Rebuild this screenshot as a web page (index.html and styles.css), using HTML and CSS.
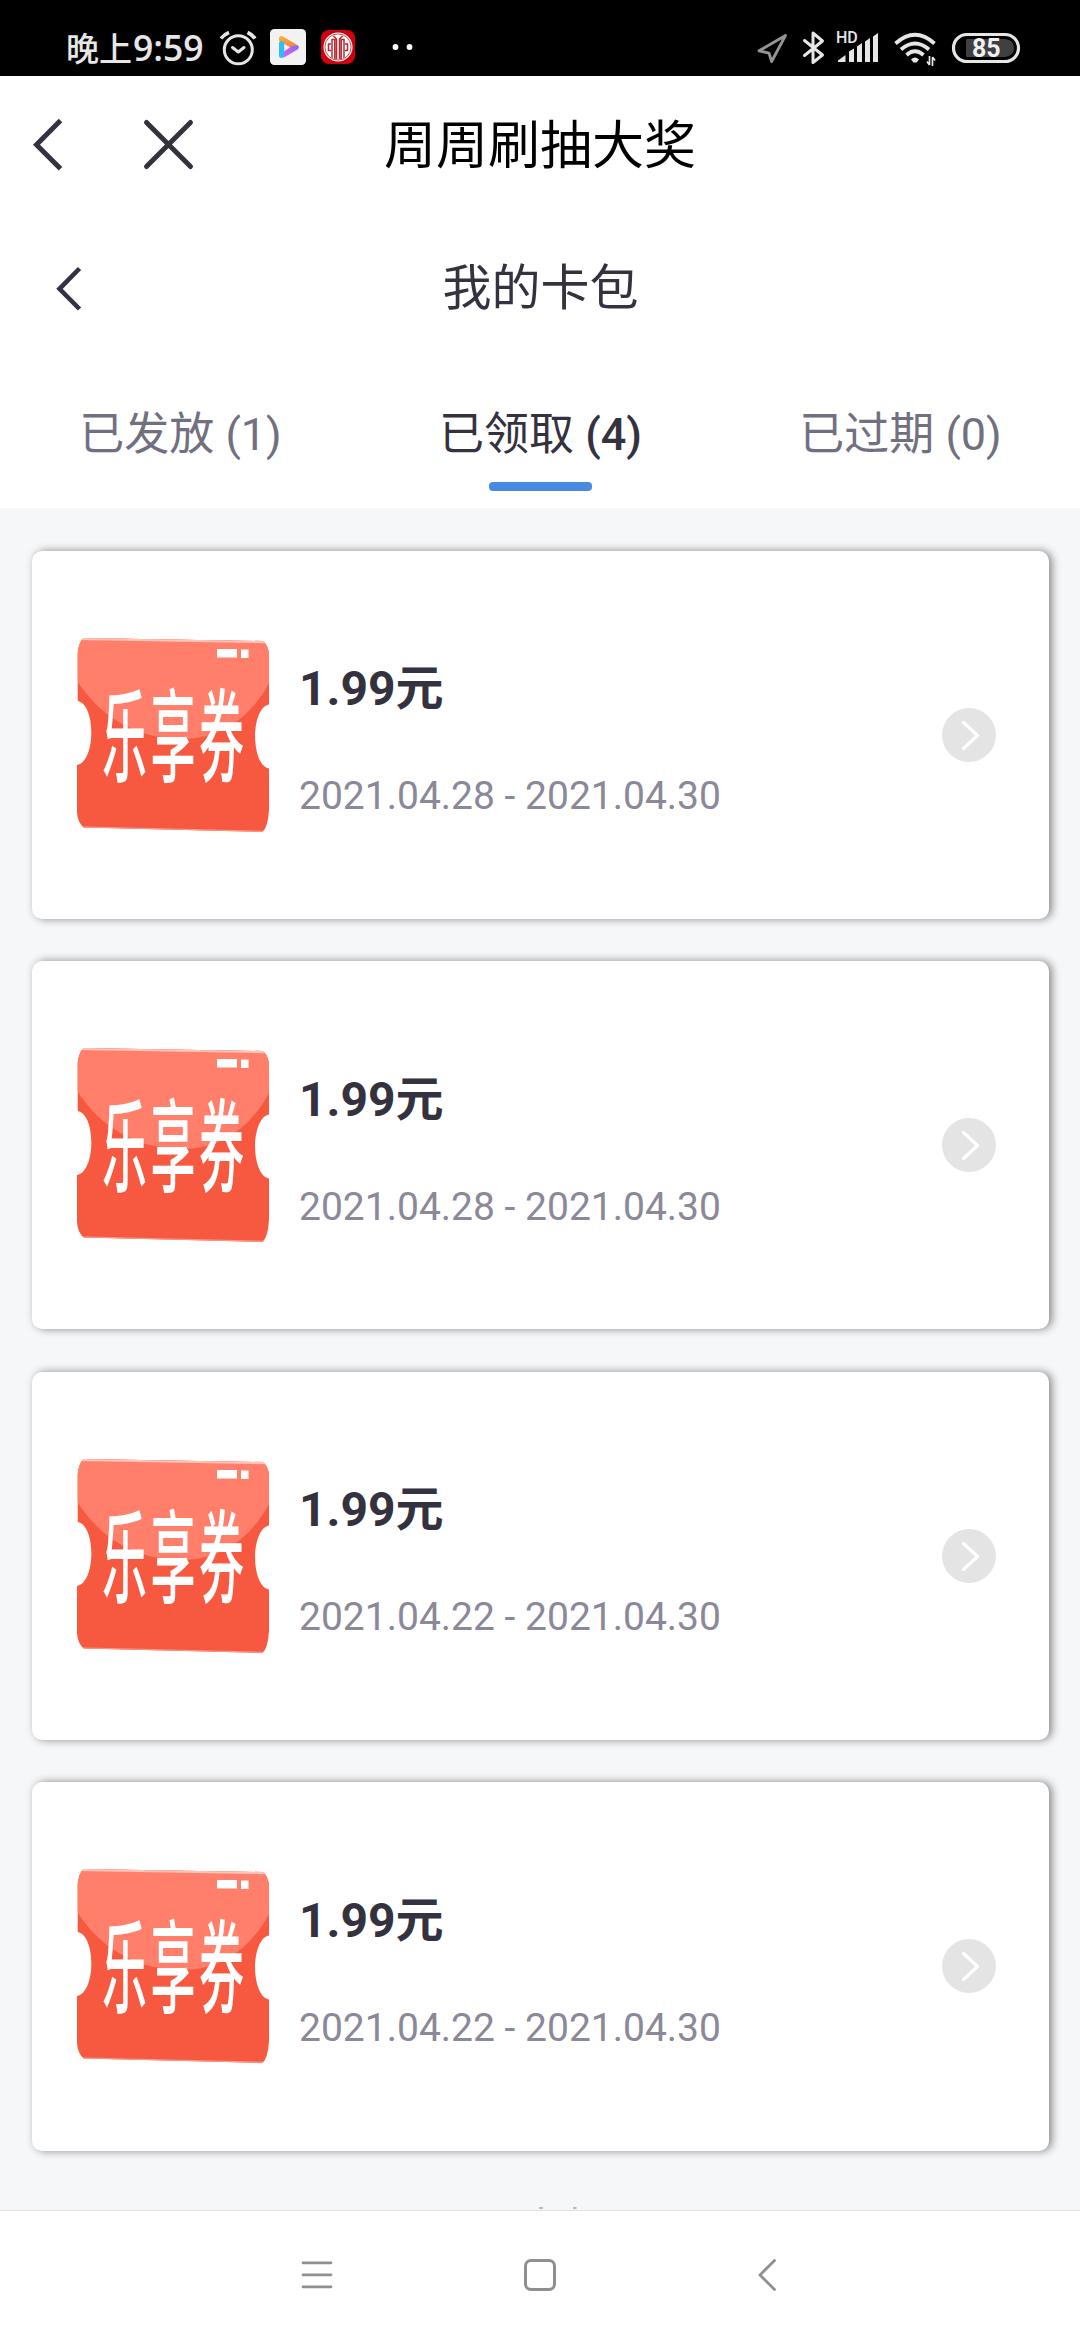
FILE: index.html
```html
<!DOCTYPE html>
<html lang="zh-CN">
<head>
<meta charset="utf-8">
<title>周周刷抽大奖</title>
<link rel="stylesheet" href="styles.css">
</head>
<body>
<svg class="defs" width="0" height="0">
  <defs>
    <linearGradient id="play-orange" x1="0" y1="0" x2="1" y2="1"><stop offset="0" stop-color="#ffb02e"/><stop offset="1" stop-color="#f07a4a"/></linearGradient>
    <linearGradient id="play-violet" x1="0" y1="1" x2="1" y2="0"><stop offset="0" stop-color="#e85cf0"/><stop offset="1" stop-color="#7a6cf5"/></linearGradient>
    <clipPath id="citic-disc"><circle cx="338" cy="47" r="12.300"/></clipPath>
    <clipPath id="ticket-shape"><path d="M7.500 2 L187 5 Q192 9 193 18 V68.500 C174.500 72 174.500 129 193 132.500 V174 Q192 191 186.500 196 L7.500 191.500 Q1.500 186 1 176 V129 C20 126 20 68 1.700 65 V17 Q2.500 7 7.500 2Z"/></clipPath>
    <symbol id="ticket" viewBox="0 0 194 198">
      <g clip-path="url(#ticket-shape)">
        <rect width="194" height="198" fill="#f75940"/>
        <path d="M0 0H194V45C176 80 146 103 106 103C58 103 22 79 0 43Z" fill="#ff7f6b"/>
        <path d="M0 2.500L194 5.800" stroke="#ffc3b9" stroke-width="3"/>
        <path d="M0 191.500L194 196" stroke="#fb9584" stroke-width="2.500"/>
      </g>
      <path d="M141 13h20v8.500h-20zM165 13.500h7.500v8.500h-7.500z" fill="#fff"/>
      <text class="ticket-text" transform="translate(26 138) scale(1 2.250)" x="0" y="0">乐享券</text>
    </symbol>
    <symbol id="go" viewBox="0 0 54 54">
      <circle cx="27" cy="27" r="27" fill="#e4e4e4"/>
      <path d="M21.500 14.500L35.500 27.500L21.500 40.500" fill="none" stroke="#fff" stroke-width="3.200" stroke-linecap="round" stroke-linejoin="round"/>
    </symbol>
  </defs>
</svg>

<div class="screen">
  <div class="statusbar">
    <span class="clock">晚上<b class="clock-digits">9:59</b></span>
    <svg class="status-left" width="200" height="76" viewBox="218 0 200 76">
      <g fill="none" stroke="#e6e6e6" stroke-width="3" stroke-linecap="round" stroke-linejoin="round">
        <circle cx="238.300" cy="49.800" r="14"/>
        <path d="M232.500 47.500L238.300 52L244 47.500"/>
        <path stroke-width="3.600" stroke-linecap="butt" d="M221 38.500Q224 34.500 229 32.500M247.500 32.500Q252.500 34.500 255 38.500"/>
      </g>
      <rect x="270" y="29" width="36" height="36" rx="4.500" fill="#f2f2f2"/>
      <path d="M279 38.500C279 36 281 35.300 283 36.500L298 45.500L294 49.500L279 41Z" fill="url(#play-orange)"/>
      <path d="M298 45.500Q300 47.500 297.500 49.500L284 57.500V51.500L292 46Z" fill="url(#play-violet)"/>
      <rect x="279" y="41" width="5.200" height="17" rx="2.500" fill="#2ebdf8"/>
      <rect x="321" y="30" width="34" height="34" rx="8" fill="#d0000f"/>
      <circle cx="338" cy="47" r="14.500" fill="#fff"/>
      <circle cx="338" cy="47" r="13.100" fill="none" stroke="#c0202a" stroke-width=".8"/>
      <g clip-path="url(#citic-disc)" fill="none" stroke="#b92b33" stroke-width="1.500">
        <path d="M331.200 39.500H334.800V60M344.800 39.500H341.200V60M332 39V58M344 39V58M333 35.500L336.500 39V60M343 35.500L339.500 39V60"/>
        <path d="M331 44H328.500V50.500H331M345 44H347.500V50.500H345"/>
      </g>
      <circle cx="395.500" cy="47" r="2.900" fill="#fff"/>
      <circle cx="409.500" cy="47" r="2.900" fill="#fff"/>
    </svg>
    <svg class="status-right" width="266" height="76" viewBox="756 0 266 76">
      <path d="M759 50.800L785.500 35.500L771.600 61.500L769 53.200Z" fill="none" stroke="#949494" stroke-width="2.800" stroke-linejoin="round"/>
      <path d="M804.500 40.500L822.500 55L813 62.500V33L822.500 41L804.500 55.500" fill="none" stroke="#e6e6e6" stroke-width="3" stroke-linejoin="round" stroke-linecap="round"/>
      <text class="hd" x="836" y="43">HD</text>
      <path d="M838 62V60.500L845.500 55V62ZM849 62V51.500L854 48.500V62ZM857 62V46.500L862 43V62ZM865 62V41.500L870 38V62ZM873 62V36.500L878 33V62Z" fill="#e6e6e6"/>
      <g fill="none" stroke="#e6e6e6" stroke-width="3.800">
        <path d="M895.500 43.500Q915 26 934.500 43.500"/>
        <path d="M901 49.500Q915 37.500 929 49.500"/>
        <path d="M906.500 55Q915 47.500 923.500 55"/>
        <path stroke-width="1.700" d="M929.500 56V65M932.500 66V57M927 61.500L929.500 65M935 60.500L932.500 57"/>
      </g>
      <path d="M911 59.500Q915 55.500 919 59.500L916.500 62.500H913.500Z" fill="#e6e6e6"/>
      <rect x="953.500" y="34.500" width="65" height="27" rx="13.500" fill="none" stroke="#e6e6e6" stroke-width="3.200"/>
      <path d="M967 39H1005Q1014 40 1014 48Q1014 56 1005 57H967Q966 57 966 56V40Q966 39 967 39Z" fill="#404040"/>
      <text class="battery" x="986.300" y="57">85</text>
    </svg>
  </div>

  <header class="appbar">
    <div class="appbar-actions">
      <svg width="32" height="54" viewBox="32 118 32 54"><path d="M60.500 120.500L36.500 144.700L60.500 168.700" fill="none" stroke="#34323e" stroke-width="5"/></svg>
      <svg width="54" height="54" viewBox="142 118 54 54"><path d="M146.500 122.500L190.500 166.500M190.500 122.500L146.500 166.500" fill="none" stroke="#34323e" stroke-width="5" stroke-linecap="round"/></svg>
    </div>
    <h1 class="appbar-title">周周刷抽大奖</h1>
  </header>

  <div class="pagebar">
    <svg class="pagebar-back" width="30" height="48" viewBox="55 265 30 48"><path d="M79.500 268.500L59.500 288.800L79.500 309" fill="none" stroke="#34323e" stroke-width="4.600"/></svg>
    <h2 class="pagebar-title">我的卡包</h2>
  </div>

  <nav class="tabs">
    <div class="tab">已发放 (1)</div>
    <div class="tab tab-active">已领取 <span class="tab-count">(4)</span></div>
    <div class="tab">已过期 (0)</div>
  </nav>

  <main class="list">
    <article class="card">
      <svg class="card-ticket"><use href="#ticket"/></svg>
      <div class="card-body"><div class="card-price">1.99元</div><div class="card-date">2021.04.28 - 2021.04.30</div></div>
      <svg class="card-go"><use href="#go"/></svg>
    </article>
    <article class="card">
      <svg class="card-ticket"><use href="#ticket"/></svg>
      <div class="card-body"><div class="card-price">1.99元</div><div class="card-date">2021.04.28 - 2021.04.30</div></div>
      <svg class="card-go"><use href="#go"/></svg>
    </article>
    <article class="card">
      <svg class="card-ticket"><use href="#ticket"/></svg>
      <div class="card-body"><div class="card-price">1.99元</div><div class="card-date">2021.04.22 - 2021.04.30</div></div>
      <svg class="card-go"><use href="#go"/></svg>
    </article>
    <article class="card">
      <svg class="card-ticket"><use href="#ticket"/></svg>
      <div class="card-body"><div class="card-price">1.99元</div><div class="card-date">2021.04.22 - 2021.04.30</div></div>
      <svg class="card-go"><use href="#go"/></svg>
    </article>
    <svg class="list-end" width="40" height="2" viewBox="0 0 40 2"><path d="M1 1h4M35 1h3.500" stroke="#a5a6a8" stroke-width="1.600"/></svg>
  </main>

  <footer class="navbar">
    <svg width="34" height="34" viewBox="300 2258 34 34"><path d="M303 2262.800H331M303 2274.800H331M303 2286.800H331" stroke="#8f8f8f" stroke-width="2.800" stroke-linecap="round"/></svg>
    <svg width="34" height="34" viewBox="523 2258 34 34"><rect x="525.500" y="2260.500" width="29" height="29" rx="5.500" fill="none" stroke="#8f8f8f" stroke-width="3"/></svg>
    <svg class="navbar-back" width="22" height="34" viewBox="756 2258 22 34"><path d="M774.500 2260.500L760 2275L774.500 2289.500" fill="none" stroke="#8f8f8f" stroke-width="2.800" stroke-linecap="round" stroke-linejoin="round"/></svg>
  </footer>
</div>
</body>
</html>
```
FILE: styles.css
```css
* { box-sizing: border-box; }
body {
  margin: 0;
  background: #fff;
  color: #34323e;
  font-family: Roboto, "Noto Sans CJK SC", sans-serif;
}
svg { display: block; flex: none; }
h1, h2 { margin: 0; font-weight: 400; }
.defs { position: absolute; }

.screen {
  display: flex;
  flex-direction: column;
  width: 1080px;
  height: 2340px;
  overflow: hidden;
}

.statusbar {
  display: flex;
  height: 76px;
  padding: 0 58px 0 66px;
  background: #000;
  color: #e6e6e6;
}
.clock {
  width: 152px;
  padding-top: 22px;
  font: 500 33px/50px "Noto Sans CJK SC", sans-serif;
  white-space: nowrap;
}
.clock-digits { margin-left: 1px; font: 600 35.500px/50px "Open Sans", sans-serif; }
.status-right { margin-left: auto; }
.hd { font: 500 16px Roboto, sans-serif; fill: #e6e6e6; }
.battery { font: 700 25px Roboto, sans-serif; fill: #f0f0f0; text-anchor: middle; }

.appbar {
  display: grid;
  grid-template-columns: 1fr auto 1fr;
  align-items: center;
  height: 138px;
  padding: 0 32px;
}
.appbar-actions { display: flex; gap: 78px; }
.appbar-title { padding-top: 3px; color: #000; font-size: 52px; line-height: 76px; }

.pagebar {
  display: grid;
  grid-template-columns: 1fr auto 1fr;
  align-items: center;
  height: 150px;
  padding: 0 54px 0 55px;
}
.pagebar-title { font-size: 49px; line-height: 70px; }

.tabs {
  display: grid;
  grid-template-columns: repeat(3, 1fr);
  height: 144px;
}
.tab {
  padding: 38px 0 0 1px;
  color: #727080;
  font-size: 45px;
  line-height: 66px;
  text-align: center;
  white-space: pre;
}
.tab-active { color: #34323e; }
.tab-active::after {
  content: "";
  display: block;
  width: 103px;
  height: 9px;
  margin: 14px auto 0;
  border-radius: 4px;
  background: #4a89e2;
}
.tab-count { font-weight: 500; }

.list {
  display: flex;
  flex-direction: column;
  gap: 42.400px;
  height: 1702px;
  padding: 42.600px 31px 0 32px;
  background: #f6f7f9;
}
.card {
  display: flex;
  flex: none;
  align-items: center;
  height: 368.200px;
  padding: 0 53px 0 44px;
  border-radius: 10px;
  background: #fff;
  box-shadow: 3px 0 9px #888;
}
.card-ticket { width: 194px; height: 198px; }
.card-body { flex: 1; padding: 11px 0 0 29px; white-space: nowrap; }
.card-price { font-size: 48px; font-weight: 700; line-height: 70px; }
.card-date { margin-top: 42px; color: #8a8899; font-size: 39px; line-height: 60px; }
.card-go { width: 54px; height: 54px; }
.ticket-text {
  fill: #fff;
  font: 500 45px "Noto Sans CJK SC", sans-serif;
  letter-spacing: 3.500px;
}
.list-end { align-self: center; margin: 14px 0 0 35px; }

.navbar {
  display: flex;
  gap: 189px;
  height: 130px;
  padding: 47px 0 0 300px;
  border-top: 1px solid #dfe1e4;
  background: #fff;
}
.navbar-back { margin-left: 10px; }
```
